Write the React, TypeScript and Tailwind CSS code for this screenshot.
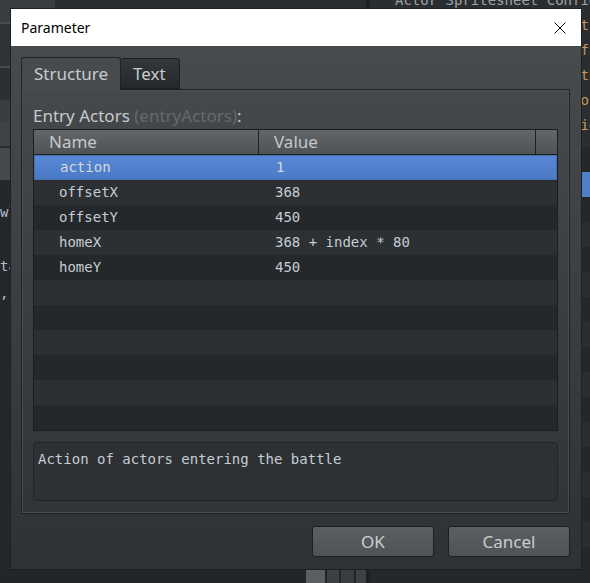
const sans = "font-['Noto_Sans','Open_Sans',sans-serif]";
const mono = "font-['DejaVu_Sans_Mono',monospace]";

type Entry = { name: string; value: string };

const entries: Entry[] = [
  { name: "action", value: "1" },
  { name: "offsetX", value: "368" },
  { name: "offsetY", value: "450" },
  { name: "homeX", value: "368 + index * 80" },
  { name: "homeY", value: "450" },
];

// the list always fills its frame with striped empty rows
const ROW_COUNT = 11;

const codeLines: [string, string][] = [
  ["Actor Spritesheet Conf", "iguration"],
  [" * @text Entry Actors", "tion"],
  [" * @desc Battler con", "fig"],
  [" * @type struct<Posi", "tion>"],
  [" * @default {\"homeX\":", "order"],
  [" * @parent BattlePosit", "ion"],
];

function Backdrop() {
  return (
    <div className="flex h-full w-full">
      {/* left side: toolbar + script editor */}
      <div className="flex w-[366px] shrink-0 flex-col bg-[#25282b]">
        <div className="flex h-[22px]">
          <div className="w-[55px] bg-[#3a3d40]" />
          <div className="flex-1 rounded-tl-[4px] bg-[#2a2d30]" />
        </div>
        <div className="h-[2px] bg-[#4a4d50]" />
        <div className="h-[42px] bg-[#303336]" />
        <div className="h-[2px] bg-[#4a4d50]" />
        <div className="h-[32px] bg-[#2d3033]" />
        <div className="h-[22px] bg-[#3a3d40]" />
        <div className="h-[24px] bg-[#404346]" />
        <div className="h-[2px] bg-[#2a2d30]" />
        <div className="h-[32px] bg-[#46494c]" />
        <div className={`flex flex-1 flex-col pt-[19px] text-[14px] leading-[27px] text-[#aebccb] ${mono}`}>
          <div>wlk</div>
          <div>&nbsp;</div>
          <div>tar</div>
          <div>,</div>
        </div>
        <div className="flex h-[14px] justify-end gap-[2px] bg-[#232629]">
          <div className="w-[19px] bg-[#5b5f62]" />
          <div className="w-[12px] bg-[#3d4043]" />
          <div className="w-[13px] bg-[#3a3d40]" />
          <div className="w-[10px] bg-[#3f4245]" />
        </div>
      </div>
      <div className="w-[4px] shrink-0 bg-[#1e2123]" />
      {/* right side: plugin source + list */}
      <div className="flex min-w-0 flex-1 flex-col overflow-hidden bg-[#25282b]">
        <div className={`-mt-[12px] h-[159px] shrink-0 bg-[#2b2e31] pl-[25px] text-[14px] leading-[25px] ${mono}`}>
          {codeLines.map(([head, tail], i) => (
            <div key={i} className="whitespace-pre text-[#9da3a8]">
              {head.padEnd(22)}
              <span className={i === 0 ? "" : "text-[#c9955c]"}>{tail}</span>
            </div>
          ))}
        </div>
        {Array.from({ length: 17 }, (_, i) => (
          <div
            key={i}
            className={`h-[25px] shrink-0 ${i === 1 ? "bg-[#5080cc]" : i % 2 === 0 ? "bg-[#25282b]" : "bg-[#2b2e31]"}`}
          />
        ))}
      </div>
    </div>
  );
}

function ListRow({ entry, index }: { entry?: Entry; index: number }) {
  const selected = index === 0;
  const stripe = selected
    ? "border border-[#4870aa] bg-gradient-to-b from-[#5888d6] to-[#4b7ac5] text-[#d6dade]"
    : index % 2 === 1
      ? "bg-[#2c3033] text-[#c5ccd3]"
      : "bg-[#25282b] text-[#c5ccd3]";
  return (
    <div className={`flex h-[25px] items-center text-[14px] ${mono} ${stripe}`}>
      <div className="w-[225px] shrink-0 pl-[25px]">{entry?.name}</div>
      <div className="pl-[16px]">{entry?.value}</div>
    </div>
  );
}

function ParameterDialog() {
  return (
    <div className={`absolute left-[11px] top-[9px] flex h-[560px] w-[570px] flex-col shadow-[0_0_0_1px_#1d1f21] ${sans}`}>
      <div className="flex h-[37px] shrink-0 items-center justify-between bg-white pl-[10px] pr-[15px]">
        <span className="text-[14px] text-black">Parameter</span>
        <svg width="12" height="12" viewBox="0 0 12 12" fill="none" stroke="#000" strokeWidth="1">
          <path d="M0.5 0.5 L11.5 11.5 M11.5 0.5 L0.5 11.5" />
        </svg>
      </div>

      <div className="flex flex-1 flex-col bg-gradient-to-b from-[#474b4e] to-[#2f3235] pb-[12px] pl-[10px] pr-[11px] pt-[11px]">
        <div className="flex h-[32px] items-end text-[17px]">
          <div className="relative z-10 -mb-px flex h-[33px] w-[100px] items-center rounded-t-[3px] border border-b-0 border-[#202325] bg-[#474b4e] pl-[12px] text-[#c7cbce]">
            Structure
          </div>
          <div className="flex h-[31px] w-[59px] items-center rounded-t-[3px] border border-l-0 border-[#1c1f21] bg-gradient-to-b from-[#34383b] to-[#25282b] pl-[12px] text-[#c7cbce]">
            Text
          </div>
        </div>

        <div className="flex h-[425px] flex-col border border-[#1f2224] px-[11px] pt-[14px] shadow-[inset_0_0_0_1px_#4a4e51]">
          <div className="h-[25px] text-[17px] leading-[23px] text-[#c7cbce]">
            Entry Actors <span className="text-[#66696c]">(entryActors)</span>:
          </div>

          <div className="flex h-[302px] flex-col border border-[#1b1d1f] bg-[#25282b]">
            <div className="flex h-[25px] shrink-0 border-b border-[#1b1d1f] bg-gradient-to-b from-[#62666a] to-[#4f5356] text-[17px] text-[#c4c8cb]">
              <div className="flex w-[225px] items-center border-r border-[#1d1f21] pl-[15px]">Name</div>
              <div className="flex w-[277px] items-center border-r border-[#1d1f21] pl-[15px]">Value</div>
              <div className="flex-1" />
            </div>
            {Array.from({ length: ROW_COUNT }, (_, i) => (
              <ListRow key={i} entry={entries[i]} index={i} />
            ))}
          </div>

          <div className={`mt-[11px] h-[59px] rounded-[4px] border border-[#222527] bg-[#2e3134] pl-[4px] pt-[6px] text-[14px] text-[#c5ccd3] ${mono}`}>
            Action of actors entering the battle
          </div>
        </div>

        <div className="mt-[12px] flex justify-end gap-[14px]">
          {["OK", "Cancel"].map((label) => (
            <button
              key={label}
              className="flex h-[31px] w-[122px] items-center justify-center rounded-[3px] border border-[#1c1e20] bg-gradient-to-b from-[#5b5f62] to-[#4f5356] text-[17px] text-[#c9cdd0]"
            >
              {label}
            </button>
          ))}
        </div>
      </div>
    </div>
  );
}

export default function App() {
  return (
    <div className="relative h-[583px] w-[590px] overflow-hidden bg-[#25282b]">
      <Backdrop />
      <ParameterDialog />
    </div>
  );
}
